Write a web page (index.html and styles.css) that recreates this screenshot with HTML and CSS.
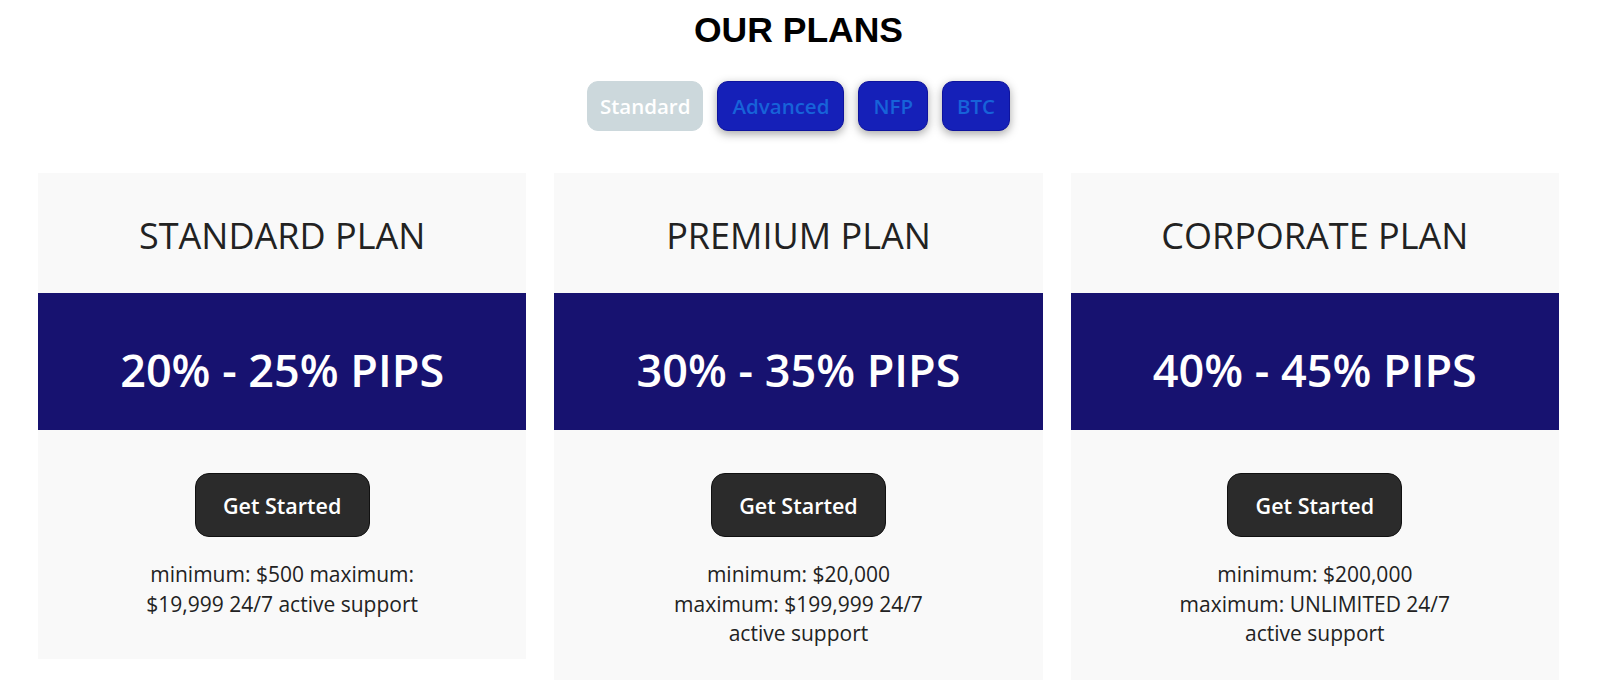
FILE: index.html
```html
<!DOCTYPE html>
<html>
<head>
<link rel="stylesheet" href="styles.css">
<title>Our Plans</title>
</head>
<body>
  <div id="main">
    <h1 class="page_title">OUR PLANS</h1>

    <div class="tabs">
      <button type="button" class="tab tab_active">Standard</button>
      <button type="button" class="tab">Advanced</button>
      <button type="button" class="tab">NFP</button>
      <button type="button" class="tab">BTC</button>
    </div>

    <div class="plans">
      <div class="plan">
        <div class="plan_head">STANDARD PLAN</div>
        <div class="plan_rate">20% - 25% PIPS</div>
        <div class="plan_body">
          <button type="button" class="button_start">Get Started</button>
          <p class="plan_info">minimum: $500 maximum: $19,999 24/7 active support</p>
        </div>
      </div>

      <div class="plan">
        <div class="plan_head">PREMIUM PLAN</div>
        <div class="plan_rate">30% - 35% PIPS</div>
        <div class="plan_body">
          <button type="button" class="button_start">Get Started</button>
          <p class="plan_info">minimum: $20,000 maximum: $199,999 24/7 active support</p>
        </div>
      </div>

      <div class="plan">
        <div class="plan_head">CORPORATE PLAN</div>
        <div class="plan_rate">40% - 45% PIPS</div>
        <div class="plan_body">
          <button type="button" class="button_start">Get Started</button>
          <p class="plan_info">minimum: $200,000 maximum: UNLIMITED 24/7 active support</p>
        </div>
      </div>
    </div>
  </div>
</body>
</html>
```

FILE: styles.css
```css
body {
  margin: 0;
  background-color: #ffffff;
  font-family: "Open Sans", "Noto Sans", sans-serif;
  color: #222222;
}

#main {
  width: 1521px;
  margin-left: 38px;
}

.page_title {
  margin: 10px 0 0 0;
  text-align: center;
  font-family: "Liberation Sans", Arial, sans-serif;
  font-size: 35.5px;
  font-weight: bold;
  color: #000000;
}

.tabs {
  display: flex;
  justify-content: center;
  gap: 14px;
  margin-top: 30px;
}

.tab {
  height: 50px;
  padding: 0 14px;
  border: 1px solid #0e139e;
  border-radius: 11px;
  background-color: #1520b8;
  color: #1763d9;
  font-family: "Open Sans", "Noto Sans", sans-serif;
  font-size: 20.5px;
  font-weight: 600;
  box-shadow: 0 3px 10px rgba(0, 0, 0, 0.35);
}

.tab_active {
  padding: 0 12px;
  border-color: #ccd8dc;
  background-color: #ccd8dc;
  color: #ffffff;
  box-shadow: none;
}

.plans {
  display: grid;
  grid-template-columns: repeat(3, 1fr);
  gap: 28px;
  align-items: start;
  margin-top: 42px;
}

.plan {
  background-color: #f9f9f9;
}

.plan_head {
  height: 120px;
  box-sizing: border-box;
  padding-top: 5px;
  display: flex;
  align-items: center;
  justify-content: center;
  font-size: 36px;
  color: #222222;
}

.plan_rate {
  height: 137px;
  box-sizing: border-box;
  padding-top: 16px;
  display: flex;
  align-items: center;
  justify-content: center;
  background-color: #171270;
  color: #ffffff;
  font-size: 45px;
  font-weight: 600;
}

.plan_body {
  display: flex;
  flex-direction: column;
  align-items: center;
  padding: 43px 0 40px 0;
}

.button_start {
  width: 175px;
  height: 64px;
  border: 1px solid #111111;
  border-radius: 14px;
  background-color: #2b2b2b;
  color: #ffffff;
  font-family: "Open Sans", "Noto Sans", sans-serif;
  font-size: 21.5px;
  font-weight: 600;
}

.plan_info {
  width: 280px;
  margin: 23px 0 0 0;
  text-align: center;
  font-size: 21px;
  line-height: 29.6px;
  color: #222222;
}
```
